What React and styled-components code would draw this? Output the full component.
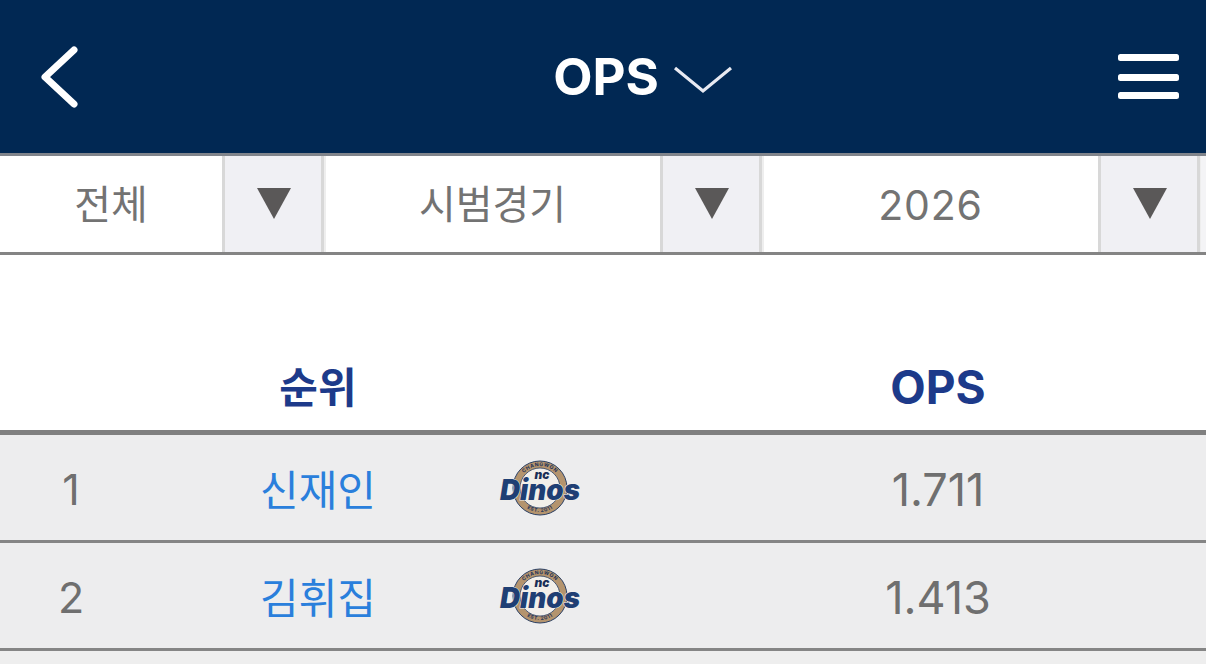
import React from "react";
import styled, { createGlobalStyle } from "styled-components";

const Global = createGlobalStyle`
  html, body { margin: 0; padding: 0; background: #fff; overflow: hidden; }
  body { font-family: Inter, "Noto Sans CJK KR", sans-serif; }
`;
const Page = styled.div`width: 1206px; height: 664px; overflow: hidden; background: #fff;`;
const Header = styled.header`
  height: 153px; background: #012853;
  display: grid; grid-template-columns: 1fr auto 1fr; align-items: center;
`;
const IconButton = styled.button`
  border: 0; background: none; padding: 0; display: flex;
  justify-self: ${(p) => (p.$end ? "end" : "start")};
  margin: ${(p) => (p.$end ? "0 27px 0 0" : "0 0 0 40px")};
`;
const Title = styled.div`
  display: flex; align-items: center; gap: 14px; color: #fff; margin-left: 80px;
  font: 700 51px/1 Inter, sans-serif;
`;
const FilterBar = styled.div`
  display: flex; gap: 1px; height: 96px;
  border-top: 3px solid #80848b; border-bottom: 3px solid #848484;
`;
const Select = styled.div`display: flex; width: ${(p) => p.$w}px;`;
const Value = styled.div`
  flex: 1; display: flex; align-items: center; justify-content: center; padding-bottom: 4px;
  font: 400 40px/1 "Noto Sans CJK KR", sans-serif; color: #737373;
`;
const YearValue = styled(Value)`font-family: Inter, sans-serif; font-size: 41px; letter-spacing: 0.8px; padding-bottom: 0; padding-top: 2px;`;
const Arrow = styled.div`
  width: 96px; background: #f0f0f4; display: flex; align-items: center; justify-content: center;
  border-left: 3px solid #d8d8d8; border-right: 3px solid #d8d8d8; box-shadow: 2px 0 0 #eeeeee;
`;
const Triangle = styled.div`
  width: 0; height: 0; margin: 0 0 2px 2px;
  border-left: 17px solid transparent; border-right: 17px solid transparent; border-top: 31px solid #5a5858;
`;
const Spacer = styled.div`flex: 1; background: #f4f4f6;`;
const grid = `display: grid; grid-template-columns: 142px 352px 186px 516px 10px; align-items: center; text-align: center;`;
const HeadRow = styled.div`
  ${grid} height: 180px; box-sizing: border-box; padding-top: 84px;
  border-bottom: 5px solid #808080; color: #1d3a8a;
`;
const HeadCell = styled.div`
  font: 700 42px/1 "Noto Sans CJK KR", sans-serif; grid-column: ${(p) => p.$col};
`;
const HeadLatin = styled(HeadCell)`font: 700 46px/1 Inter, sans-serif; padding-top: 4px;`;
const Row = styled.div`
  ${grid} height: 108px; box-sizing: border-box; background: #ededee; border-bottom: 3px solid #858585;
`;
const EmptyRow = styled.div`height: 16px; background: #eeeeee;`;
const Rank = styled.div`font: 400 43px/1 Inter, sans-serif; color: #6f6f6f; padding-top: 3px;`;
const Name = styled.a`font: 400 42px/1 "Noto Sans CJK KR", sans-serif; color: #2a7fdc;`;
const LogoCell = styled.div`display: flex; padding-left: 5px;`;
const Ops = styled.div`font: 400 45px/1 Inter, sans-serif; color: #6f6f6f; padding-top: 3px;`;

const Back = () => (
  <svg width="40" height="64" viewBox="0 0 40 64">
    <path d="M34 5 L5 32 L34 59" fill="none" stroke="#fff" strokeWidth="7" strokeLinecap="round" strokeLinejoin="round" />
  </svg>
);
const Chevron = () => (
  <svg width="60" height="28" viewBox="0 0 60 28" style={{ marginTop: 7 }}>
    <path d="M2 2 L30 25 L58 2" fill="none" stroke="#e8eaf2" strokeWidth="3.2" />
  </svg>
);
const Menu = () => (
  <svg width="61" height="46" viewBox="0 0 61 46">
    <g fill="#fff">
      <rect y="0" width="61" height="7" rx="2.5" />
      <rect y="20" width="61" height="7" rx="2.5" />
      <rect y="38" width="61" height="7" rx="2.5" />
    </g>
  </svg>
);
const Logo = ({ id }) => (
  <svg width="82" height="56" viewBox="0 0 82 56">
    <circle cx="41" cy="28" r="27" fill="#b4946e" stroke="#2a3f63" strokeWidth="1" />
    <circle cx="41" cy="28" r="20" fill="#f2efea" stroke="#2a3f63" strokeWidth="0.8" />
    <defs>
      <path id={`top${id}`} d="M19 28 A22 22 0 0 1 63 28" />
      <path id={`bot${id}`} d="M17 28 A24 24 0 0 0 65 28" />
    </defs>
    <text fontFamily="Inter, sans-serif" fontWeight="700" fontSize="5" fill="#1b2f57" letterSpacing="0.6">
      <textPath href={`#top${id}`} startOffset="50%" textAnchor="middle">CHANGWON</textPath>
    </text>
    <text fontFamily="Inter, sans-serif" fontWeight="700" fontSize="5" fill="#1b2f57" letterSpacing="0.5">
      <textPath href={`#bot${id}`} startOffset="50%" textAnchor="middle">EST. 2011</textPath>
    </text>
    <text x="43" y="19" textAnchor="middle" fontFamily="Inter, sans-serif" fontWeight="900" fontStyle="italic" fontSize="12" fill="#1b2f57">nc</text>
    <text x="41" y="40" textAnchor="middle" fontFamily="Inter, sans-serif" fontWeight="900" fontStyle="italic" fontSize="28" textLength="80" lengthAdjust="spacingAndGlyphs" fill="#1f3f74" stroke="#f2efea" strokeWidth="1" paintOrder="stroke">Dinos</text>
  </svg>
);

const rows = [
  { rank: 1, name: "신재인", ops: "1.711" },
  { rank: 2, name: "김휘집", ops: "1.413" },
];

export default function App() {
  return (
    <Page>
      <Global />
      <Header>
        <IconButton aria-label="뒤로"><Back /></IconButton>
        <Title>OPS <Chevron /></Title>
        <IconButton $end aria-label="메뉴"><Menu /></IconButton>
      </Header>
      <FilterBar>
        <Select $w={324}><Value>전체</Value><Arrow><Triangle /></Arrow></Select>
        <Select $w={437}><Value>시범경기</Value><Arrow><Triangle /></Arrow></Select>
        <Select $w={437}><YearValue>2026</YearValue><Arrow><Triangle /></Arrow></Select>
        <Spacer />
      </FilterBar>
      <HeadRow>
        <HeadCell $col={2}>순위</HeadCell>
        <HeadLatin $col={4}>OPS</HeadLatin>
      </HeadRow>
      {rows.map((r) => (
        <Row key={r.rank}>
          <Rank>{r.rank}</Rank>
          <Name>{r.name}</Name>
          <LogoCell><Logo id={r.rank} /></LogoCell>
          <Ops>{r.ops}</Ops>
        </Row>
      ))}
      <EmptyRow />
    </Page>
  );
}
